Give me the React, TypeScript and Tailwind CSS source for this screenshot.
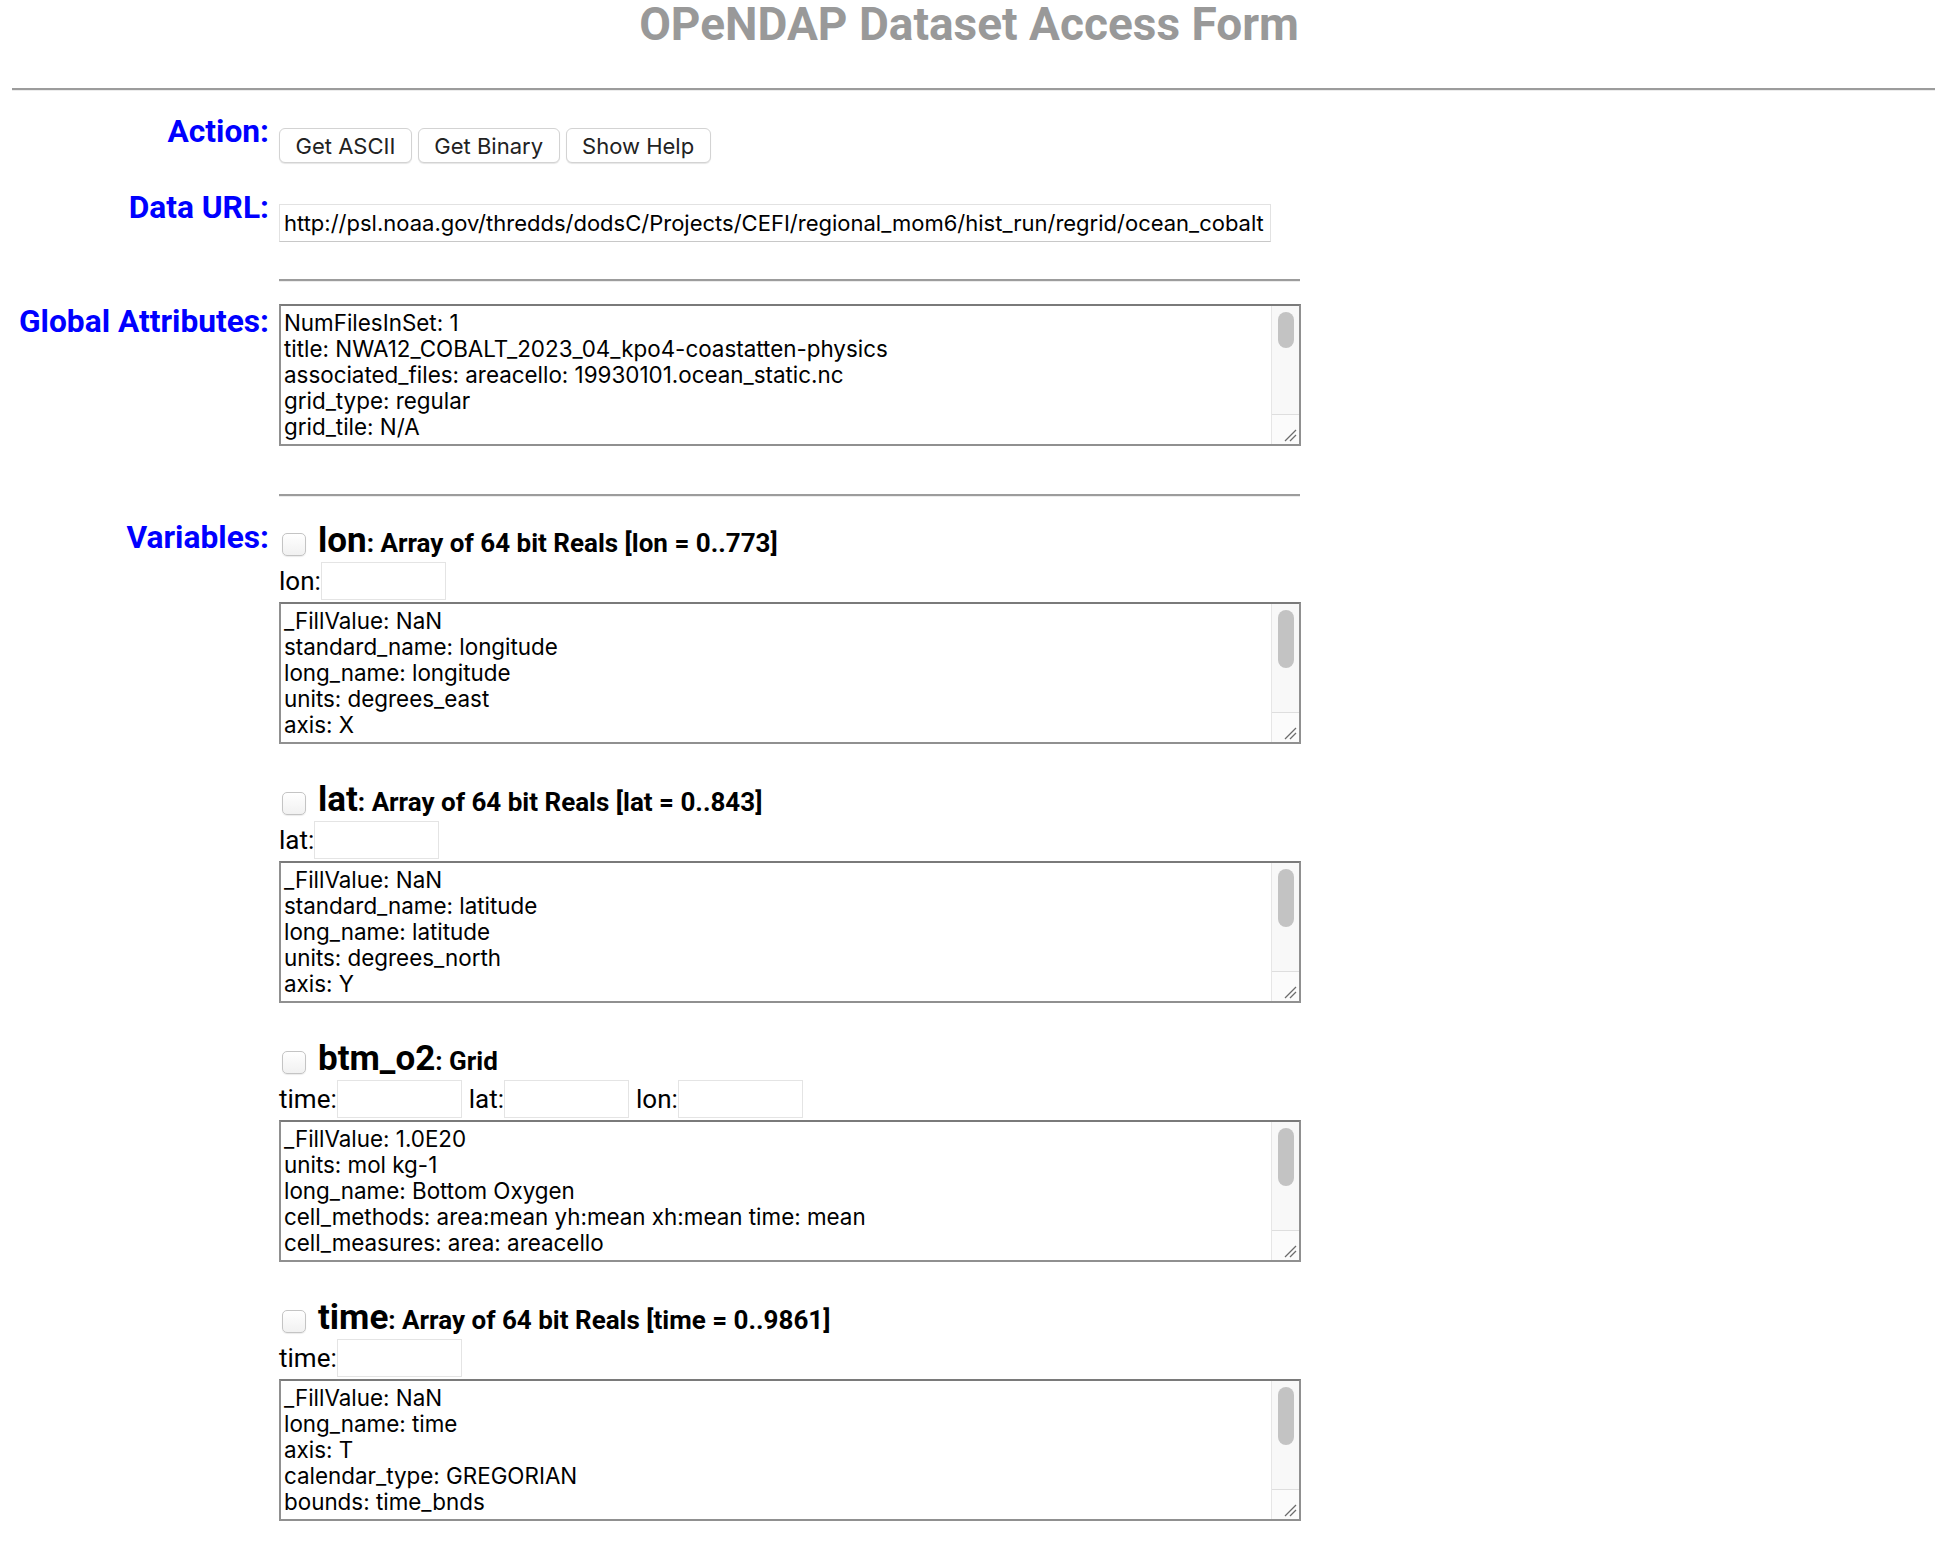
import React from "react";

const SYS = "font-['Inter','Noto_Sans',sans-serif]";

function Checkbox() {
  return (
    <div className="ml-[3px] mt-[13px] h-[23px] w-[24px] shrink-0 rounded-[5px] border border-[#c4c4c4] bg-gradient-to-b from-white to-[#f1f1f1] shadow-[0_1px_1px_rgba(0,0,0,0.08)]" />
  );
}

function SmallInput() {
  return <div className="h-[38px] w-[125px] border border-[#e4e4e4] bg-white" />;
}

function Divider({ className = "" }: { className?: string }) {
  return <div className={"h-0 border-t-2 border-b border-t-[#9c9c9c] border-b-[#ececec] " + className} />;
}

function AttrBox({ lines, thumb }: { lines: string[]; thumb: "short" | "long" }) {
  return (
    <div className="flex h-[142px] w-[1022px] border-2 border-[#909090] border-t-[#7a7a7a] bg-white">
      <div className={"flex-1 overflow-hidden pl-[3px] pt-[4px] text-[22.4px] leading-[26px] text-black " + SYS}>
        {lines.map((l) => (
          <div key={l} className="whitespace-nowrap">
            {l}
          </div>
        ))}
      </div>
      <div className="flex w-[28px] flex-col border-l border-[#e6e6e6] bg-[#f8f8f8]">
        <div className="flex flex-1 justify-center pt-[6px]">
          <div className={"w-[16px] rounded-full bg-[#c3c3c3] " + (thumb === "short" ? "h-[36px]" : "h-[58px]")} />
        </div>
        <div className="flex h-[30px] items-end justify-end border-t border-[#dedede] bg-[#fbfbfb] pb-[2px] pr-[2px]">
          <svg width="13" height="13" viewBox="0 0 13 13">
            <line x1="1" y1="12" x2="12" y2="1" stroke="#6b6b6b" strokeWidth="1.3" />
            <line x1="6" y1="12" x2="12" y2="6" stroke="#6b6b6b" strokeWidth="1.3" />
          </svg>
        </div>
      </div>
    </div>
  );
}

type Variable = {
  name: string;
  desc: string;
  dims: string[];
  lines: string[];
};

const variables: Variable[] = [
  {
    name: "lon",
    desc: ": Array of 64 bit Reals [lon = 0..773]",
    dims: ["lon"],
    lines: ["_FillValue: NaN", "standard_name: longitude", "long_name: longitude", "units: degrees_east", "axis: X"],
  },
  {
    name: "lat",
    desc: ": Array of 64 bit Reals [lat = 0..843]",
    dims: ["lat"],
    lines: ["_FillValue: NaN", "standard_name: latitude", "long_name: latitude", "units: degrees_north", "axis: Y"],
  },
  {
    name: "btm_o2",
    desc: ": Grid",
    dims: ["time", "lat", "lon"],
    lines: [
      "_FillValue: 1.0E20",
      "units: mol kg-1",
      "long_name: Bottom Oxygen",
      "cell_methods: area:mean yh:mean xh:mean time: mean",
      "cell_measures: area: areacello",
    ],
  },
  {
    name: "time",
    desc: ": Array of 64 bit Reals [time = 0..9861]",
    dims: ["time"],
    lines: ["_FillValue: NaN", "long_name: time", "axis: T", "calendar_type: GREGORIAN", "bounds: time_bnds"],
  },
];

function Label({ children }: { children: React.ReactNode }) {
  return (
    <div className="w-[279px] shrink-0 pr-[10px] text-right text-[31.7px] font-bold leading-[36px] text-[#0000ff]">
      {children}
    </div>
  );
}

export default function App() {
  return (
    <div className="min-h-[1552px] bg-white pb-[30px] font-['Roboto',sans-serif] text-black">
      <h1 className="pt-[1px] text-center text-[46px] font-bold leading-[46px] text-[#999999]">
        OPeNDAP Dataset Access Form
      </h1>
      <Divider className="ml-[12px] mr-[3px] mt-[41px]" />

      <div className="mt-[23px] flex">
        <Label>Action:</Label>
        <div className={"mt-[14px] flex gap-[6px] " + SYS}>
          {["Get ASCII", "Get Binary", "Show Help"].map((b) => (
            <div
              key={b}
              className="flex h-[35px] items-center rounded-[6px] border border-[#d3d3d3] bg-white px-[15.5px] pt-[1px] text-[22px] text-[#222] shadow-[0_1px_1px_rgba(0,0,0,0.1)]"
            >
              {b}
            </div>
          ))}
        </div>
      </div>

      <div className="mt-[27px] flex">
        <Label>Data URL:</Label>
        <div className="flex flex-col">
          <div
            className={
              "mt-[14px] flex h-[38px] w-[992px] items-center overflow-hidden whitespace-nowrap border border-[#e2e2e2] border-b-[#c8c8c8] bg-white pl-[4px] text-[22px] text-black " +
              SYS
            }
          >
            http://psl.noaa.gov/thredds/dodsC/Projects/CEFI/regional_mom6/hist_run/regrid/ocean_cobalt
          </div>
          <Divider className="mt-[37px] w-[1021px]" />
        </div>
      </div>

      <div className="mt-[22px] flex">
        <Label>Global Attributes:</Label>
        <div className="flex flex-col">
          <AttrBox
            thumb="short"
            lines={[
              "NumFilesInSet: 1",
              "title: NWA12_COBALT_2023_04_kpo4-coastatten-physics",
              "associated_files: areacello: 19930101.ocean_static.nc",
              "grid_type: regular",
              "grid_tile: N/A",
            ]}
          />
          <Divider className="mt-[48px] w-[1021px]" />
        </div>
      </div>

      <div className="mt-[23px] flex">
        <Label>Variables:</Label>
        <div className="flex flex-col">
          {variables.map((v, i) => (
            <div key={v.name} className={i === 0 ? "" : "mt-[35px]"}>
              <div className="flex h-[42px] items-start">
                <Checkbox />
                <div className="ml-[12px] flex items-baseline font-bold leading-[42px]">
                  <span className="text-[35px]">{v.name}</span>
                  <span className="text-[26px]">{v.desc}</span>
                </div>
              </div>
              <div className="flex h-[40px] items-start">
                {v.dims.map((d, j) => (
                  <div key={d} className={"flex items-center " + (j > 0 ? "ml-[7px]" : "")}>
                    <span className="text-[26px] leading-[38px]">{d}:</span>
                    <SmallInput />
                  </div>
                ))}
              </div>
              <AttrBox thumb="long" lines={v.lines} />
            </div>
          ))}
        </div>
      </div>
    </div>
  );
}
